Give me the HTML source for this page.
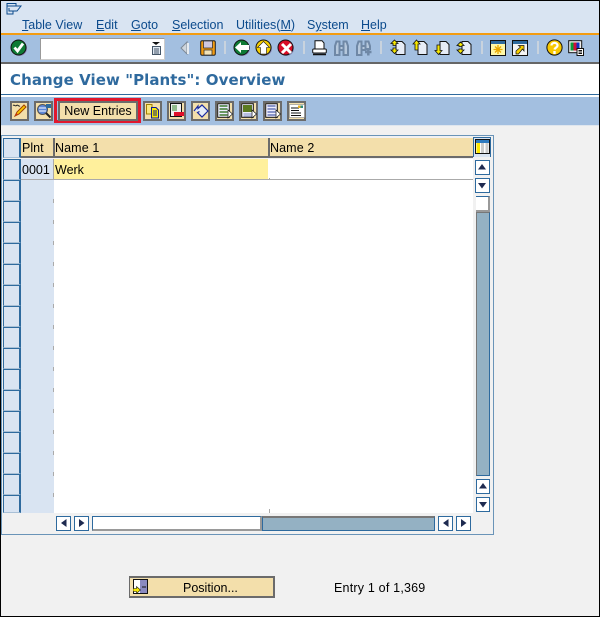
<!DOCTYPE html>
<html><head><meta charset="utf-8">
<style>
html,body{margin:0;padding:0;background:#f1f1f1}
#p{position:relative;width:600px;height:617px;overflow:hidden;background:#f1f1f1;font-family:"Liberation Sans",sans-serif;font-size:12px;color:#000}
#p div,#p svg{position:absolute}
.t{white-space:nowrap;line-height:14px}
.m{color:#0b4a8c;top:18px;font-size:12.5px;white-space:nowrap;line-height:14px}
.m u{text-underline-offset:1px}
.b{box-sizing:border-box;width:19px;height:20px;top:101px;background:#f3dfab;border:2px solid #6b6b6b}
.sep{top:41px;width:2px;height:13px;background:#c9d3de}
.sb{box-sizing:border-box;width:15px;height:15px;background:#fff;border:1px solid #2e6a9e}
.rb{box-sizing:border-box;left:3px;width:18px;height:21px;background:#d9e4f2;border:1px solid #2e6a9e;border-right-width:2px;border-bottom-color:#a9c0d6}
.tick2{left:53px;width:1px;height:4px;background:#aaa}
</style></head><body>
<div id="p">
<!-- bars -->
<div style="left:0;top:0;width:600px;height:33px;background:#d9e4f2"></div>
<div style="left:0;top:33px;width:600px;height:2px;background:#f39c12"></div>
<div style="left:0;top:35px;width:600px;height:27px;background:#a3bfe0"></div>
<div style="left:0;top:62px;width:600px;height:2px;background:#666"></div>
<div style="left:0;top:64px;width:600px;height:30px;background:#fff"></div>
<div style="left:0;top:94px;width:600px;height:1px;background:#2e6a9e"></div>
<div style="left:0;top:95px;width:600px;height:2px;background:#fff"></div>
<div style="left:0;top:97px;width:600px;height:28px;background:#a3bfe0"></div>
<div style="left:0;top:125px;width:600px;height:1px;background:#dfe6ee"></div>

<!-- window icon -->
<svg style="left:6px;top:3px" width="16" height="12" viewBox="0 0 16 12"><path d="M1 .5H10V3H15L11 8H7V11H1Z M1 3H10 M7 8H3V5" fill="none" stroke="#0b4a8c"/></svg>

<!-- menu -->
<div class="m" style="left:22px"><u>T</u>able View</div>
<div class="m" style="left:96px"><u>E</u>dit</div>
<div class="m" style="left:131px"><u>G</u>oto</div>
<div class="m" style="left:172px"><u>S</u>election</div>
<div class="m" style="left:236px">Utilities(<u>M</u>)</div>
<div class="m" style="left:307px">S<u>y</u>stem</div>
<div class="m" style="left:361px"><u>H</u>elp</div>

<!-- system toolbar -->
<svg style="left:10px;top:39px" width="18" height="18" viewBox="0 0 18 18"><circle cx="9.500" cy="9.500" r="7.500" fill="#8a8ab8"/><circle cx="8.500" cy="8.500" r="7.500" fill="#0e7a35" stroke="#111"/><path d="M4.500 8.500L7.500 12L13 4.500" fill="none" stroke="#fff" stroke-width="2.800"/></svg>
<div style="box-sizing:border-box;left:40px;top:38px;width:125px;height:22px;background:#fff;border:1px solid #999;border-right-color:#ccc;border-bottom-color:#ccc"></div>
<svg style="left:151px;top:42px" width="11" height="13" viewBox="0 0 11 13"><path d="M1 0H9L5 3Z" fill="#111"/><rect x="1.500" y="4.500" width="8" height="8" fill="#dfe8f2" stroke="#456"/><path d="M3 7H8M3 9H8M3 11H8" stroke="#456"/></svg>
<svg style="left:180px;top:41px" width="10" height="14" viewBox="0 0 10 14"><path d="M7 1V13L1 7Z" fill="#cfd6dd" stroke="#7e8a96"/><path d="M8 2V13" stroke="#e6ebf0" stroke-width="2"/></svg>
<svg style="left:200px;top:40px" width="16" height="16" viewBox="0 0 16 16"><rect x=".7" y=".7" width="14.600" height="14.600" rx="1.500" fill="#f39c12" stroke="#222"/><rect x="3.500" y="1" width="9" height="7" fill="#cfc8e0" stroke="#222" stroke-width=".7"/><rect x="4" y="10" width="8" height="5" fill="#f3e3b8" stroke="#222" stroke-width=".7"/></svg>
<div class="sep" style="left:224px"></div>
<svg style="left:233px;top:39px" width="18" height="18" viewBox="0 0 18 18"><circle cx="9.500" cy="9.500" r="7.500" fill="#8a8ab8"/><circle cx="8.500" cy="8.500" r="7.500" fill="#0e7a35" stroke="#111"/><path d="M2 8.500L8 3V6H16V11H8V14Z" fill="#fff"/></svg>
<svg style="left:255px;top:39px" width="18" height="18" viewBox="0 0 18 18"><circle cx="9.500" cy="9.500" r="7.500" fill="#8a8ab8"/><circle cx="8.500" cy="8.500" r="7.500" fill="#f8d000" stroke="#111"/><path d="M8.500 2.500L14.500 8.500H11.500V15H5.500V8.500H2.500Z" fill="#fff" stroke="#111" stroke-width=".6"/></svg>
<svg style="left:277px;top:39px" width="18" height="18" viewBox="0 0 18 18"><circle cx="9.500" cy="9.500" r="7.500" fill="#8a8ab8"/><circle cx="8.500" cy="8.500" r="7.500" fill="#d80c26" stroke="#111"/><path d="M5 5L14 14M14 5L5 14" stroke="#fff" stroke-width="3"/></svg>
<div class="sep" style="left:303px"></div>
<svg style="left:312px;top:40px" width="15" height="16" viewBox="0 0 15 16"><path d="M3 .7H10L12 3V9H3Z" fill="#fff" stroke="#111"/><rect x=".7" y="9" width="13.600" height="4" rx="1" fill="#fff" stroke="#111"/><path d="M1 14.500H14" stroke="#111" stroke-width="1.500"/></svg>
<svg style="left:334px;top:40px" width="15" height="16" viewBox="0 0 15 16"><path d="M2.500 1.500H5.500V15H1V6ZM9.500 1.500H12.500L14 6V15H9.500ZM5.500 6H9.500V10H5.500Z" fill="#b6c8dc" stroke="#6f88a6" stroke-width="2"/></svg>
<svg style="left:356px;top:40px" width="16" height="16" viewBox="0 0 16 16"><path d="M2.500 1.500H5.500V15H1V6ZM9.500 1.500H12.500L14 6V9H9.500ZM5.500 6H9.500V10H5.500Z" fill="#b6c8dc" stroke="#6f88a6" stroke-width="2"/><path d="M9 12H15.500M12.300 9V15.500" stroke="#6f88a6" stroke-width="2.500"/></svg>
<div class="sep" style="left:380px"></div>
<svg style="left:390px;top:39px" width="16" height="17" viewBox="0 0 16 17"><path d="M6 2.500H12L15 5.500V15.500H6Z" fill="#e6ecf6" stroke="#111"/><path d="M4.500 1L8 4.500H6V6.500H3V4.500H1Z M4.500 14.500L8 11H6V9H3V11H1Z" fill="#f8e800" stroke="#111" stroke-width=".8"/></svg>
<svg style="left:412px;top:39px" width="16" height="17" viewBox="0 0 16 17"><path d="M6 2.500H12L15 5.500V15.500H6Z" fill="#e6ecf6" stroke="#111"/><path d="M4.500 1L8 5H6V11H3V5H1Z" fill="#f8e800" stroke="#111" stroke-width=".8"/></svg>
<svg style="left:434px;top:39px" width="16" height="17" viewBox="0 0 16 17"><path d="M6 2.500H12L15 5.500V15.500H6Z" fill="#e6ecf6" stroke="#111"/><path d="M4.500 15.500L8 11.500H6V6H3V11.500H1Z" fill="#f8e800" stroke="#111" stroke-width=".8"/></svg>
<svg style="left:456px;top:39px" width="16" height="17" viewBox="0 0 16 17"><path d="M6 2.500H12L15 5.500V15.500H6Z" fill="#e6ecf6" stroke="#111"/><path d="M4.500 3L8 6.500H6V7.500H3V6.500H1Z M4.500 14.500L8 11H6V10H3V11H1Z" fill="#f8e800" stroke="#111" stroke-width=".8"/></svg>
<div class="sep" style="left:481px"></div>
<svg style="left:490px;top:40px" width="16" height="16" viewBox="0 0 16 16"><rect x=".5" y=".5" width="15" height="15" fill="#fff8a8" stroke="#111"/><rect x="1" y="1" width="14" height="3" fill="#2e6a9e"/><path d="M8 5V14M3.500 9.500H12.500M5 6.500L11 12.500M11 6.500L5 12.500" stroke="#e8a800" stroke-width="1.300"/></svg>
<svg style="left:512px;top:40px" width="16" height="16" viewBox="0 0 16 16"><rect x=".5" y=".5" width="15" height="15" fill="#f4f4f4" stroke="#111"/><rect x="1" y="1" width="14" height="3" fill="#2e6a9e"/><path d="M4 14L4 11L8.500 7L6.500 5.500H12V11L10.500 9L6.500 14Z" fill="#f8d000" stroke="#111" stroke-width=".7"/></svg>
<div class="sep" style="left:537px"></div>
<svg style="left:546px;top:39px" width="17" height="18" viewBox="0 0 17 18"><circle cx="8.500" cy="8.500" r="7.600" fill="#f8c800" stroke="#111"/><path d="M5.500 6.500C5.500 3 11.500 3 11.500 6.500C11.500 8.500 9 8.500 8.500 10.500" fill="none" stroke="#fff" stroke-width="2.200"/><rect x="7.300" y="12" width="2.400" height="3" fill="#fff"/></svg>
<svg style="left:568px;top:40px" width="16" height="16" viewBox="0 0 16 16"><rect x=".7" y=".7" width="13" height="12" fill="#eee" stroke="#111"/><rect x="2.500" y="2.500" width="3" height="8" fill="#0a9a3a"/><rect x="5.500" y="2.500" width="3" height="8" fill="#d0103a"/><rect x="8.500" y="2.500" width="3" height="8" fill="#1030c0"/><rect x="9" y="8.500" width="6.500" height="7" fill="#fff" stroke="#111"/><path d="M10.500 10.500H14M10.500 12H14M10.500 13.500H14" stroke="#111"/></svg>

<!-- title -->
<div class="t" style="left:10px;top:72px;font-family:'DejaVu Sans',sans-serif;font-weight:bold;font-size:15px;letter-spacing:.07px;color:#2f6a9e;line-height:17px">Change View "Plants": Overview</div>

<!-- app toolbar -->
<div class="b" style="left:10px"></div>
<svg style="left:12px;top:103px" width="16" height="16" viewBox="0 0 16 16"><path d="M3 13L5 9L12 2L14 4L7 11Z" fill="#f8c800" stroke="#a04000"/><path d="M3 13L4.500 10L6 11.500Z" fill="#d03010"/><path d="M1 2.500C2.500 1 3 4 4.500 2.500S6.500 4 8 3" fill="none" stroke="#222"/></svg>
<div class="b" style="left:34px"></div>
<svg style="left:36px;top:103px" width="16" height="16" viewBox="0 0 16 16"><circle cx="6.500" cy="6.500" r="5" fill="#5b86d8" stroke="#555"/><path d="M3 5H10M3 8H10" stroke="#fff"/><path d="M10 10L14.500 14.500" stroke="#222" stroke-width="2"/><rect x="10" y="1" width="5" height="4" fill="#2e6a9e"/></svg>
<div style="left:54px;top:98px;box-sizing:border-box;width:87px;height:25px;border:3px solid #e0182d"></div>
<div class="b t" style="left:58px;width:80px;font-size:12.500px;text-align:center;line-height:17px">New Entries</div>
<div class="b" style="left:143px"></div>
<svg style="left:145px;top:103px" width="16" height="16" viewBox="0 0 16 16"><path d="M1.500 1.500H7V11H1.500Z" fill="#f8e880" stroke="#a08000"/><path d="M6.500 4.500H11L13.500 7V15H6.500Z" fill="#f8e800" stroke="#0b1a90"/><path d="M8 8H12M8 10H12M8 12H12" stroke="#0b1a90"/></svg>
<div class="b" style="left:167px"></div>
<svg style="left:169px;top:103px" width="16" height="16" viewBox="0 0 16 16"><rect x="1.500" y=".5" width="11" height="13" fill="#f0f0f0" stroke="#111"/><path d="M3 3H8M3 5H8M3 7H8" stroke="#5a9a50" stroke-width="1.200"/><rect x="5" y="9" width="10" height="4" fill="#e0102a"/></svg>
<div class="b" style="left:191px"></div>
<svg style="left:193px;top:103px" width="16" height="16" viewBox="0 0 16 16"><path d="M1 8L5 3V5.500L9 2L15 8L9 14L4.500 9.500L6.500 8.500" fill="#e6ecf6" stroke="#1a2aa0" stroke-width="1.200"/></svg>
<div class="b" style="left:215px"></div>
<svg style="left:217px;top:103px" width="16" height="16" viewBox="0 0 16 16"><rect x=".7" y=".7" width="11.600" height="13.600" fill="#eef" stroke="#111"/><path d="M2.500 3H10.500M2.500 6H10.500M2.500 9H10.500M2.500 12H10.500" stroke="#3e7a30" stroke-width="1.600"/><path d="M11 7V15L15.500 11Z" fill="#fff" stroke="#111" stroke-width=".7"/></svg>
<div class="b" style="left:239px"></div>
<svg style="left:241px;top:103px" width="16" height="16" viewBox="0 0 16 16"><rect x=".7" y=".7" width="11.600" height="13.600" fill="#eef" stroke="#111"/><rect x="2" y="2" width="9" height="7" fill="#5b7a20"/><path d="M2.500 11H10.500M2.500 13H10.500" stroke="#7d8cc0"/><path d="M11 7V15L15.500 11Z" fill="#fff" stroke="#111" stroke-width=".7"/></svg>
<div class="b" style="left:263px"></div>
<svg style="left:265px;top:103px" width="16" height="16" viewBox="0 0 16 16"><rect x=".7" y=".7" width="11.600" height="13.600" fill="#eef" stroke="#111"/><path d="M2.500 3H10.500M2.500 6H10.500M2.500 9H10.500M2.500 12H10.500" stroke="#6a78b8" stroke-width="1.600"/><path d="M11 7V15L15.500 11Z" fill="#fff" stroke="#111" stroke-width=".7"/></svg>
<div class="b" style="left:287px"></div>
<svg style="left:289px;top:103px" width="16" height="16" viewBox="0 0 16 16"><rect x=".5" y="1.500" width="15" height="13" fill="#fff" stroke="#888" stroke-width=".6"/><path d="M2 5H10M2 7.500H10M2 10H12M2 12.500H12" stroke="#111"/><rect x="9" y="2.500" width="2.500" height="2.500" fill="#e8b020"/><rect x="11.500" y="2.500" width="2.500" height="2.500" fill="#2e8a7e"/></svg>

<!-- table -->
<div style="box-sizing:border-box;left:1px;top:135px;width:493px;height:400px;border:1px solid #6a94b8;background:#f1f1f1"></div>
<div style="left:21px;top:159px;width:33px;height:354px;background:#d9e4f2"></div>
<div style="left:54px;top:159px;width:419px;height:354px;background:#fff"></div>
<!-- head -->
<div class="rb" style="top:138px;height:20px"></div>
<div style="left:21px;top:138px;width:452px;height:18px;background:#f3dfab"></div>
<div style="left:21px;top:156px;width:452px;height:2px;background:#6b6b6b"></div>
<div style="left:53px;top:138px;width:2px;height:20px;background:#6b6b6b"></div>
<div style="left:268px;top:138px;width:2px;height:20px;background:#6b6b6b"></div>
<div class="t" style="left:22px;top:141px;font-size:12.500px">Plnt</div>
<div class="t" style="left:55px;top:141px;font-size:12.500px;letter-spacing:.1px">Name 1</div>
<div class="t" style="left:270px;top:141px;font-size:12.500px;letter-spacing:.1px">Name 2</div>
<!-- row 1 -->
<div style="left:54px;top:159px;width:214px;height:20px;background:#fff09c"></div>
<div style="left:21px;top:179px;width:452px;height:1px;background:#aaa"></div>
<div style="left:269px;top:178px;width:1px;height:2px;background:#aaa"></div>
<div style="left:53px;top:159px;width:1px;height:21px;background:#aaa"></div>
<div class="t" style="left:22px;top:163px;font-size:12.500px">0001</div>
<div class="t" style="left:55px;top:163px;font-size:12.500px">Werk</div>
<!-- row selectors -->
<div class="rb" style="top:159px"></div><div class="rb" style="top:180px"></div><div class="rb" style="top:201px"></div><div class="rb" style="top:222px"></div><div class="rb" style="top:243px"></div><div class="rb" style="top:264px"></div><div class="rb" style="top:285px"></div><div class="rb" style="top:306px"></div><div class="rb" style="top:327px"></div><div class="rb" style="top:348px"></div><div class="rb" style="top:369px"></div><div class="rb" style="top:390px"></div><div class="rb" style="top:411px"></div><div class="rb" style="top:432px"></div><div class="rb" style="top:453px"></div><div class="rb" style="top:474px"></div><div class="rb" style="top:495px;height:18px"></div>
<!-- ticks -->
<div class="tick2" style="top:199px"></div><div class="tick2" style="top:220px"></div><div class="tick2" style="top:241px"></div><div class="tick2" style="top:262px"></div><div class="tick2" style="top:283px"></div><div class="tick2" style="top:304px"></div><div class="tick2" style="top:325px"></div><div class="tick2" style="top:346px"></div><div class="tick2" style="top:367px"></div><div class="tick2" style="top:388px"></div><div class="tick2" style="top:409px"></div><div class="tick2" style="top:430px"></div><div class="tick2" style="top:451px"></div><div class="tick2" style="top:472px"></div><div class="tick2" style="top:493px"></div>
<div style="left:269px;top:509px;width:1px;height:4px;background:#aaa"></div>

<!-- config icon -->
<div style="box-sizing:border-box;left:473px;top:137px;width:18px;height:20px;background:#d9e4f2;border:1px solid #2e6a9e;border-bottom:0"></div>
<svg style="left:475px;top:139px" width="15" height="15" viewBox="0 0 15 15"><rect x=".5" y=".5" width="14" height="14" fill="#fff" stroke="#111"/><rect x="1" y="1" width="13" height="3" fill="#2e7ac0"/><rect x="1.500" y="4" width="3.500" height="10" fill="#ffe800"/><rect x="6" y="4" width="3" height="10" fill="#ccc"/><rect x="10.500" y="4" width="3" height="10" fill="#ccc"/></svg>

<!-- vertical scrollbar -->
<div style="left:473px;top:157px;width:4px;height:356px;background:#f1f1f1"></div>
<div class="sb" style="left:475px;top:160px"></div>
<svg style="left:478px;top:164px" width="9" height="6"><path d="M0 5.500H8L4 0Z" fill="#1e2a50"/></svg>
<div class="sb" style="left:475px;top:178px"></div>
<svg style="left:478px;top:183px" width="9" height="6"><path d="M0 0H8L4 5.500Z" fill="#1e2a50"/></svg>
<div style="box-sizing:border-box;left:476px;top:196px;width:14px;height:16px;background:#fff;border-top:1px solid #2e6a9e;border-right:2px solid #999;border-bottom:2px solid #999"></div>
<div style="box-sizing:border-box;left:476px;top:212px;width:14px;height:264px;background:#94b1c3;border:1px solid #2e6a9e;border-left:1px solid #777;border-top:1px solid #777"></div>
<div class="sb" style="left:476px;top:479px;width:14px"></div>
<svg style="left:479px;top:483px" width="9" height="6"><path d="M0 5.500H8L4 0Z" fill="#1e2a50"/></svg>
<div class="sb" style="left:476px;top:497px;width:14px"></div>
<svg style="left:479px;top:502px" width="9" height="6"><path d="M0 0H8L4 5.500Z" fill="#1e2a50"/></svg>

<!-- horizontal scrollbar -->
<div class="sb" style="left:56px;top:516px"></div>
<svg style="left:61px;top:519px" width="6" height="9"><path d="M5.500 0V8L0 4Z" fill="#1e2a50"/></svg>
<div class="sb" style="left:74px;top:516px"></div>
<svg style="left:79px;top:519px" width="6" height="9"><path d="M0 0V8L5.500 4Z" fill="#1e2a50"/></svg>
<div style="box-sizing:border-box;left:92px;top:516px;width:170px;height:15px;background:#fff;border:1px solid #2e6a9e;border-right:2px solid #999;border-bottom:2px solid #999"></div>
<div style="box-sizing:border-box;left:262px;top:516px;width:173px;height:15px;background:#94b1c3;border:1px solid #2e6a9e;border-top:2px solid #777"></div>
<div class="sb" style="left:438px;top:516px"></div>
<svg style="left:443px;top:519px" width="6" height="9"><path d="M5.500 0V8L0 4Z" fill="#1e2a50"/></svg>
<div class="sb" style="left:456px;top:516px"></div>
<svg style="left:461px;top:519px" width="6" height="9"><path d="M0 0V8L5.500 4Z" fill="#1e2a50"/></svg>

<!-- position button -->
<div style="box-sizing:border-box;left:129px;top:576px;width:146px;height:22px;background:#f3dfab;border:1px solid #6b6b6b;border-right-width:2px;border-bottom-width:2px;border-top-width:2px"></div>
<svg style="left:133px;top:579px" width="16" height="16" viewBox="0 0 16 16"><rect x=".5" y=".5" width="14" height="14" fill="#fff" stroke="#111"/><rect x="7" y="1" width="7" height="13" fill="#8a8ac0"/><path d="M9 8H13" stroke="#111"/><path d="M0 9.500H3.500V7.500L7.500 11L3.500 14.500V12.500H0Z" fill="#f8e800" stroke="#111" stroke-width=".6"/></svg>
<div class="t" style="left:183px;top:581px;font-size:12.500px">Position...</div>
<div class="t" style="left:334px;top:581px;font-size:12.500px;letter-spacing:.2px">Entry 1 of 1,369</div>

<!-- outer border -->
<div style="left:0;top:0;width:600px;height:1px;background:#000"></div>
<div style="left:0;top:0;width:1px;height:617px;background:#000"></div>
<div style="left:599px;top:0;width:1px;height:617px;background:#000"></div>
<div style="left:0;top:616px;width:600px;height:1px;background:#000"></div>
</div>
</body></html>
